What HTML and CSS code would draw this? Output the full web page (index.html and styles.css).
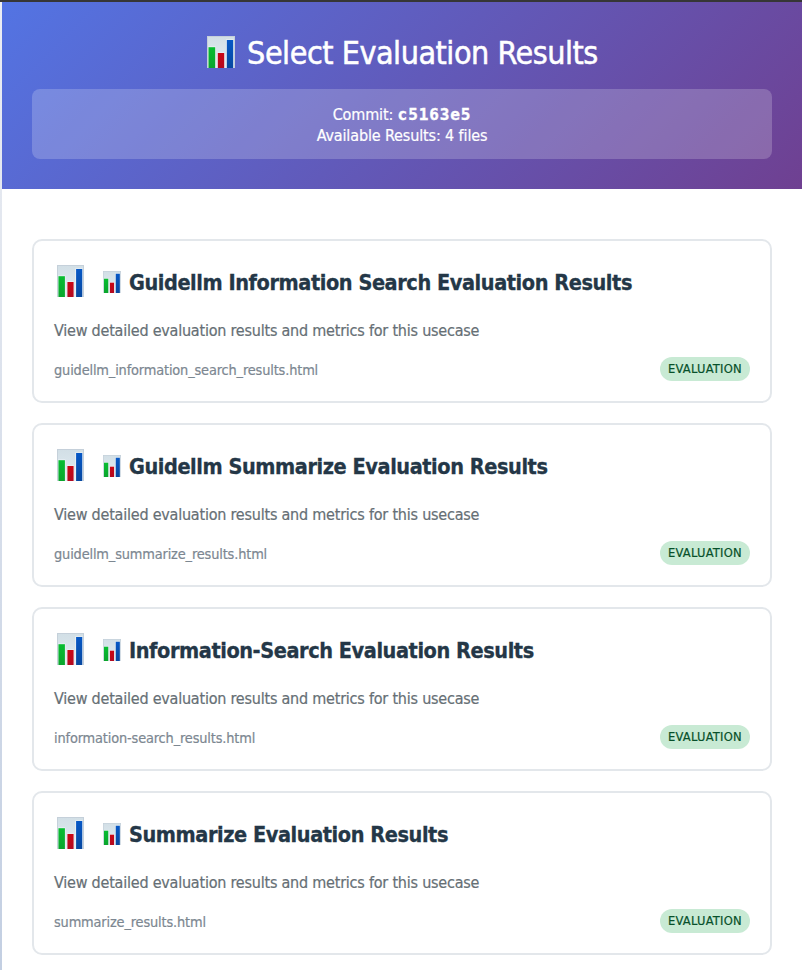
FILE: index.html
```html
<!DOCTYPE html>
<html lang="en">
<head>
<meta charset="utf-8">
<title>Select Evaluation Results</title>
<link rel="stylesheet" href="styles.css">
</head>
<body>
<svg class="defs" width="0" height="0" aria-hidden="true">
  <defs>
    <linearGradient id="paper" x1="0" y1="0" x2="0" y2="1"><stop offset="0" stop-color="#d2dfe6"/><stop offset="1" stop-color="#e3edf3"/></linearGradient>
    <linearGradient id="green" x1="0" y1="0" x2="0" y2="1"><stop offset="0" stop-color="#08bd31"/><stop offset="1" stop-color="#0aa52d"/></linearGradient>
    <linearGradient id="red" x1="0" y1="0" x2="0" y2="1"><stop offset="0" stop-color="#cb0615"/><stop offset="1" stop-color="#b30a20"/></linearGradient>
    <linearGradient id="blue" x1="0" y1="0" x2="0" y2="1"><stop offset="0" stop-color="#0758c6"/><stop offset="1" stop-color="#0748a0"/></linearGradient>
    <symbol id="chart" viewBox="0 0 28 32" preserveAspectRatio="none">
      <rect width="28" height="32" fill="#c5d0da"/>
      <rect x="1" y="1" width="26" height="31" fill="url(#paper)"/>
      <path d="M1.3 10.5h7.4V32h-7.4zM10.3 16.5h7.2V32h-7.2zM19 3.5h7.7V32H19z" fill="#f0f4f7"/>
      <rect x="1.5" y="11.2" width="6.7" height="20.8" fill="url(#green)"/>
      <rect x="10.8" y="17" width="6.4" height="15" fill="url(#red)"/>
      <rect x="19.8" y="4" width="6.4" height="28" fill="url(#blue)"/>
    </symbol>
  </defs>
</svg>
<main class="container">
  <header class="header">
    <h1><svg class="icon-title"><use href="#chart"/></svg><span>Select Evaluation Results</span></h1>
    <div class="commit-info">
      <div class="commit">Commit: <strong>c5163e5</strong></div>
      <div class="available">Available Results: 4 files</div>
    </div>
  </header>
  <section class="content">
    <article class="card">
      <h3><svg class="icon-large"><use href="#chart"/></svg><svg class="icon-small"><use href="#chart"/></svg><span>Guidellm Information Search Evaluation Results</span></h3>
      <p>View detailed evaluation results and metrics for this usecase</p>
      <div class="meta"><span class="file">guidellm_information_search_results.html</span><span class="badge">EVALUATION</span></div>
    </article>
    <article class="card">
      <h3><svg class="icon-large"><use href="#chart"/></svg><svg class="icon-small"><use href="#chart"/></svg><span>Guidellm Summarize Evaluation Results</span></h3>
      <p>View detailed evaluation results and metrics for this usecase</p>
      <div class="meta"><span class="file">guidellm_summarize_results.html</span><span class="badge">EVALUATION</span></div>
    </article>
    <article class="card">
      <h3><svg class="icon-large"><use href="#chart"/></svg><svg class="icon-small"><use href="#chart"/></svg><span>Information-Search Evaluation Results</span></h3>
      <p>View detailed evaluation results and metrics for this usecase</p>
      <div class="meta"><span class="file">information-search_results.html</span><span class="badge">EVALUATION</span></div>
    </article>
    <article class="card">
      <h3><svg class="icon-large"><use href="#chart"/></svg><svg class="icon-small"><use href="#chart"/></svg><span>Summarize Evaluation Results</span></h3>
      <p>View detailed evaluation results and metrics for this usecase</p>
      <div class="meta"><span class="file">summarize_results.html</span><span class="badge">EVALUATION</span></div>
    </article>
  </section>
</main>
</body>
</html>
```

FILE: styles.css
```css
* { box-sizing: border-box; margin: 0; padding: 0; }
body {
  height: 970px;
  overflow: hidden;
  border-top: 2px solid #363636;
  background: linear-gradient(#eceef3, #c3cfe2);
  font-family: "DejaVu Sans Condensed", "DejaVu Sans", sans-serif;
  font-stretch: condensed;
  -webkit-text-stroke: 0.2px currentColor;
}
.defs { position: absolute; }
svg { display: block; flex: none; }
.container { margin-left: 2px; height: 968px; background: #fff; }
.header {
  height: 187px;
  padding: 30px;
  background: linear-gradient(135deg, #5374e3 0%, #6f4091 100%);
  color: #fff;
  text-align: center;
}
h1 {
  display: flex;
  align-items: center;
  justify-content: center;
  height: 42px;
  margin-bottom: 15px;
  padding-left: 1px;
  font-size: 32px;
  font-weight: 400;
  letter-spacing: -0.48px;
  white-space: nowrap;
  -webkit-text-stroke-width: 0.5px;
}
.icon-title { width: 28px; height: 32px; margin: -2px 12px 0 0; }
.commit-info {
  height: 70px;
  padding: 15px;
  border-radius: 8px;
  background: rgba(255, 255, 255, 0.2);
  font-size: 16px;
  line-height: 21px;
  letter-spacing: -0.13px;
}
.commit-info strong { font-family: "DejaVu Sans Mono", monospace; letter-spacing: 0.9px; -webkit-text-stroke-width: 0.4px; }
.content { display: flex; flex-direction: column; gap: 20px; padding: 50px 30px 0; }
.card {
  height: 164px;
  padding: 20px;
  border: 2px solid #e3e7eb;
  border-radius: 10px;
}
.card h3 {
  display: flex;
  align-items: center;
  height: 42px;
  color: #243747;
  font-size: 21.5px;
  font-weight: 700;
  letter-spacing: -0.43px;
  white-space: nowrap;
  -webkit-text-stroke-width: 0.3px;
}
.card h3 span { padding-top: 1px; }
.icon-large { width: 27px; height: 32px; margin: -2px 19px 0 3px; }
.icon-small { width: 18px; height: 22px; margin-right: 8px; }
.card p {
  margin-top: 17px;
  color: #666f75;
  font-size: 16px;
  line-height: 22px;
  letter-spacing: -0.22px;
  white-space: nowrap;
}
.meta { display: flex; align-items: center; justify-content: space-between; height: 24px; margin-top: 15px; }
.file { padding-top: 1px; color: #7c8791; font-size: 14.4px; letter-spacing: -0.15px; }
.badge {
  width: 90px;
  height: 24px;
  border-radius: 12px;
  background: #c8ead4;
  color: #07502a;
  font-size: 12.8px;
  line-height: 24px;
  text-align: center;
  letter-spacing: 0.25px;
}
```
